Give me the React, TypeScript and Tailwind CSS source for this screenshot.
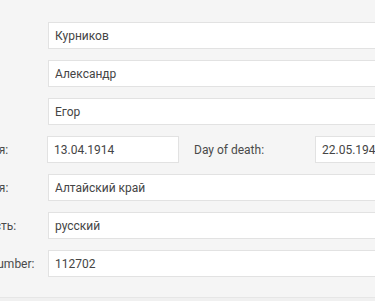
import React from 'react';

interface FieldProps {
    label: string;
    value: string;
}

const font = { fontFamily: 'Roboto, "Noto Sans", sans-serif' };

const inputCls =
    "h-[27px] border border-[#e2e2e2] bg-white px-[6px] text-[12px] leading-[25px] text-[#454545] outline-none";

const Field: React.FC<FieldProps> = ({ label, value }) => (
    <div className="flex h-[27px] items-center">
        <label className="w-[130px] shrink-0 whitespace-nowrap text-[12px] text-[#4a4a4a]">{label}</label>
        <input type="text" readOnly value={value} className={`${inputCls} w-[420px] shrink-0`} />
    </div>
);

export default function App() {
    return (
        <div className="h-[301px] w-[375px] overflow-hidden bg-[#f0f0f0]" style={font}>
            <div className="h-[298px] border-b border-[#e6e6e6] bg-[#f5f5f5] pt-[22px]">
                <div className="ml-[-82px] flex flex-col gap-[11px]">
                    <Field label="Фамилия:" value="Курников" />
                    <Field label="Имя:" value="Александр" />
                    <Field label="Отчество:" value="Егор" />
                    <div className="flex h-[27px] items-center">
                        <label className="w-[129px] shrink-0 whitespace-nowrap text-[12px] text-[#4a4a4a]">Дата рождения:</label>
                        <input type="text" readOnly value="13.04.1914" className={`${inputCls} w-[132px] shrink-0`} />
                        <label className="ml-[15px] w-[121px] shrink-0 text-[12px] text-[#4a4a4a]">Day of death:</label>
                        <input type="text" readOnly value="22.05.1944" className={`${inputCls} w-[132px] shrink-0`} />
                    </div>
                    <Field label="Край рождения:" value="Алтайский край" />
                    <Field label="Национальность:" value="русский" />
                    <Field label="Identification number:" value="112702" />
                </div>
            </div>
        </div>
    );
}
